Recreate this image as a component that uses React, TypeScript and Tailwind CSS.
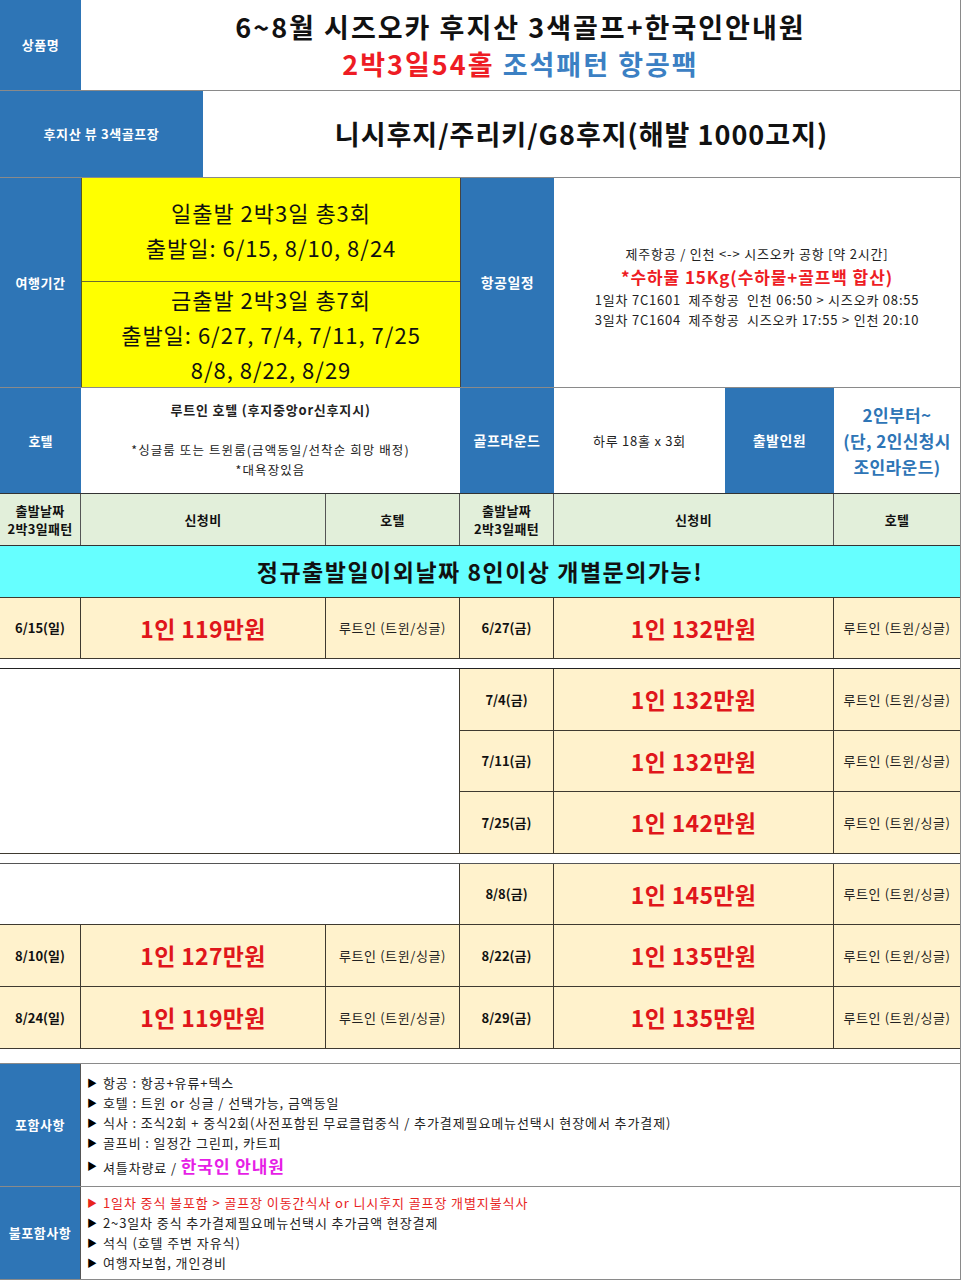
import React from "react";

type P = { date: string; price: string };

function PriceRow({ date, price, side, h }: P & { side: "l" | "r"; h: string }) {
  return (
    <div className={`flex ${h} border-b-[1.5px] border-[#3f3a30] bg-[#fff2cc]`}>
      <div
        className={`${side === "l" ? "w-[81px]" : "w-[94px]"} flex items-center justify-center border-r-[1.5px] border-[#3f3a30] text-[13px] font-bold text-[#111]`}
      >
        {date}
      </div>
      <div
        className={`${side === "l" ? "w-[245px]" : "w-[280px]"} flex items-center justify-center border-r-[1.5px] border-[#3f3a30] text-[23px] font-bold text-[#e0161b] tracking-[0.3px]`}
      >
        {price}
      </div>
      <div
        className={`${side === "l" ? "w-[134px] border-r-[1.5px] border-[#3f3a30]" : "flex-1"} flex items-center justify-center text-[13px] text-[#222] tracking-[0.6px]`}
      >
        루트인 (트윈/싱글)
      </div>
    </div>
  );
}

function Blank({ h }: { h: string }) {
  return <div className={`${h} bg-white border-r-[1.5px] border-[#3f3a30]`} />;
}

function Bullet({ children, red }: { children: React.ReactNode; red?: boolean }) {
  return (
    <div className={`flex items-center gap-[5px] ${red ? "text-[#e8241e]" : "text-[#222]"}`}>
      <span className={`text-[10px] ${red ? "text-[#e8241e]" : "text-black"}`}>▶</span>
      <span>{children}</span>
    </div>
  );
}

export default function App() {
  return (
    <div className="w-[961px] h-[1280px] bg-white font-['Noto_Sans_CJK_KR','Noto_Sans',sans-serif] overflow-hidden border-r border-[#8a8a8a]">
      {/* Row 1 */}
      <div className="flex h-[91px] border-b border-[#8a8a8a]">
        <div className="w-[81px] bg-[#2e75b6] flex items-center justify-center text-white text-[13px] font-bold tracking-[0.5px]">상품명</div>
        <div className="flex-1 flex flex-col items-center justify-center leading-[37px]">
          <div className="text-[27px] font-bold text-[#111] tracking-[2px]">6~8월 시즈오카 후지산 3색골프+한국인안내원</div>
          <div className="text-[27px] font-bold tracking-[2px]">
            <span className="text-[#ee1c24]">2박3일54홀</span> <span className="text-[#3b80c3]">조석패턴 항공팩</span>
          </div>
        </div>
      </div>

      {/* Row 2 */}
      <div className="flex h-[87px] border-b border-[#8a8a8a]">
        <div className="w-[203px] bg-[#2e75b6] flex items-center justify-center text-white text-[13px] font-bold tracking-[0.6px]">후지산 뷰 3색골프장</div>
        <div className="flex-1 flex items-center justify-center text-[27px] font-bold text-[#111] tracking-[1px]">
          니시후지/주리키/G8후지(해발 1000고지)
        </div>
      </div>

      {/* Row 3 */}
      <div className="flex h-[210px] border-b border-[#8a8a8a]">
        <div className="w-[81px] bg-[#2e75b6] flex items-center justify-center text-white text-[13px] font-bold tracking-[0.5px]">여행기간</div>
        <div className="w-[379px] flex flex-col bg-[#ffff00] border-l border-[#5a5a20] text-[22px] text-[#111] leading-[35px] tracking-[1px]">
          <div className="h-[105px] flex flex-col items-center justify-center border-b border-[#6b6b30]">
            <div>일출발 2박3일 총3회</div>
            <div>출발일: 6/15, 8/10, 8/24</div>
          </div>
          <div className="flex-1 flex flex-col items-center justify-center">
            <div>금출발 2박3일 총7회</div>
            <div>출발일: 6/27, 7/4, 7/11, 7/25</div>
            <div>8/8, 8/22, 8/29</div>
          </div>
        </div>
        <div className="w-[94px] bg-[#2e75b6] flex items-center justify-center text-white text-[14px] font-bold border-l border-[#444] tracking-[0.5px]">항공일정</div>
        <div className="flex-1 flex flex-col items-center justify-center text-[13px] text-[#222] leading-[20px] pt-[8px] tracking-[0.8px]">
          <div>제주항공 / 인천 &lt;-&gt; 시즈오카 공항 [약 2시간]</div>
          <div className="text-[17px] font-bold text-[#ee1c24] leading-[26px] tracking-[0.9px]">*수하물 15Kg(수하물+골프백 합산)</div>
          <div>1일차 7C1601&nbsp;&nbsp;제주항공&nbsp;&nbsp;인천 06:50 &gt; 시즈오카 08:55</div>
          <div>3일차 7C1604&nbsp;&nbsp;제주항공&nbsp;&nbsp;시즈오카 17:55 &gt; 인천 20:10</div>
        </div>
      </div>

      {/* Row 4 */}
      <div className="flex h-[106px] border-b-[1.5px] border-[#333]">
        <div className="w-[81px] bg-[#2e75b6] flex items-center justify-center text-white text-[13px] font-bold">호텔</div>
        <div className="w-[379px] flex flex-col items-center text-[12.5px] text-[#222] pt-[12px] tracking-[1.1px]">
          <div className="font-bold text-[13px] leading-[20px] tracking-[0.8px]">루트인 호텔 (후지중앙or신후지시)</div>
          <div className="mt-[20px] leading-[20px]">*싱글룸 또는 트윈룸(금액동일/선착순 희망 배정)</div>
          <div className="leading-[20px]">*대욕장있음</div>
        </div>
        <div className="w-[94px] bg-[#2e75b6] flex items-center justify-center text-white text-[14px] font-bold tracking-[0.5px]">골프라운드</div>
        <div className="w-[171px] flex items-center justify-center text-[13px] text-[#222] tracking-[0.75px]">하루 18홀 x 3회</div>
        <div className="w-[109px] bg-[#2e75b6] flex items-center justify-center text-white text-[14px] font-bold tracking-[0.5px]">출발인원</div>
        <div className="flex-1 flex flex-col items-center justify-center text-[17px] font-bold text-[#2e75b6] leading-[26px] tracking-[0.4px]">
          <div>2인부터~</div>
          <div>(단, 2인신청시</div>
          <div>조인라운드)</div>
        </div>
      </div>

      {/* Header row */}
      <div className="flex h-[52px] bg-[#e2efda] border-b-[1.5px] border-[#333] text-[13px] font-bold text-[#111] tracking-[0.3px]">
        <div className="w-[81px] flex flex-col items-center justify-center leading-[18px] border-r border-[#555]">
          <div>출발날짜</div>
          <div>2박3일패턴</div>
        </div>
        <div className="w-[245px] flex items-center justify-center border-r border-[#555]">신청비</div>
        <div className="w-[134px] flex items-center justify-center border-r border-[#555]">호텔</div>
        <div className="w-[94px] flex flex-col items-center justify-center leading-[18px] border-r border-[#555]">
          <div>출발날짜</div>
          <div>2박3일패턴</div>
        </div>
        <div className="w-[280px] flex items-center justify-center border-r border-[#555]">신청비</div>
        <div className="flex-1 flex items-center justify-center">호텔</div>
      </div>

      {/* Cyan */}
      <div className="h-[52px] bg-[#66ffff] flex items-center justify-center text-[23px] font-bold text-[#111] border-b-[1.5px] border-[#3f3a30] tracking-[1.5px]">
        정규출발일이외날짜 8인이상 개별문의가능!
      </div>

      {/* Group 1 */}
      <div className="flex">
        <div className="w-[460px]">
          <PriceRow side="l" h="h-[61px]" date="6/15(일)" price="1인 119만원" />
        </div>
        <div className="flex-1">
          <PriceRow side="r" h="h-[61px]" date="6/27(금)" price="1인 132만원" />
        </div>
      </div>

      <div className="h-[10px] border-b-[1.5px] border-[#222]" />

      {/* Group 2 */}
      <div className="flex">
        <div className="w-[460px] flex flex-col border-b-[1.5px] border-[#3f3a30]">
          <div className="flex-1 bg-white border-r-[1.5px] border-[#3f3a30]" />
        </div>
        <div className="flex-1">
          <PriceRow side="r" h="h-[62px]" date="7/4(금)" price="1인 132만원" />
          <PriceRow side="r" h="h-[61px]" date="7/11(금)" price="1인 132만원" />
          <PriceRow side="r" h="h-[62px]" date="7/25(금)" price="1인 142만원" />
        </div>
      </div>

      <div className="h-[10px] border-b-[1.5px] border-[#555]" />

      {/* Group 3 */}
      <div className="flex">
        <div className="w-[460px]">
          <div className="border-b-[1.5px] border-[#3f3a30]">
            <Blank h="h-[60px]" />
          </div>
          <PriceRow side="l" h="h-[62px]" date="8/10(일)" price="1인 127만원" />
          <PriceRow side="l" h="h-[62px]" date="8/24(일)" price="1인 119만원" />
        </div>
        <div className="flex-1">
          <PriceRow side="r" h="h-[61px]" date="8/8(금)" price="1인 145만원" />
          <PriceRow side="r" h="h-[62px]" date="8/22(금)" price="1인 135만원" />
          <PriceRow side="r" h="h-[62px]" date="8/29(금)" price="1인 135만원" />
        </div>
      </div>

      <div className="h-[15px] border-b border-[#8a8a8a]" />

      {/* Included */}
      <div className="flex h-[123px] border-b border-[#8a8a8a]">
        <div className="w-[81px] bg-[#2e75b6] flex items-center justify-center text-white text-[13px] font-bold border-r border-[#555] tracking-[0.5px]">포함사항</div>
        <div className="flex-1 flex flex-col justify-center pl-[6px] text-[13px] leading-[20px] pt-[2px] tracking-[0.9px]">
          <Bullet>항공 : 항공+유류+텍스</Bullet>
          <Bullet>호텔 : 트윈 or 싱글 / 선택가능, 금액동일</Bullet>
          <Bullet>식사 : 조식2회 + 중식2회(사전포함된 무료클럽중식 / 추가결제필요메뉴선택시 현장에서 추가결제)</Bullet>
          <Bullet>골프비 : 일정간 그린피, 카트피</Bullet>
          <Bullet>
            셔틀차량료 / <span className="text-[17px] font-bold text-[#e61ee6] leading-[26px]">한국인 안내원</span>
          </Bullet>
        </div>
      </div>

      {/* Not included */}
      <div className="flex h-[93px] border-b border-[#8a8a8a]">
        <div className="w-[81px] bg-[#2e75b6] flex items-center justify-center text-white text-[13px] font-bold border-r border-[#555] tracking-[0.5px]">불포함사항</div>
        <div className="flex-1 flex flex-col justify-center pl-[6px] text-[13px] leading-[20px] tracking-[0.9px]">
          <Bullet red>1일차 중식 불포함 &gt; 골프장 이동간식사 or 니시후지 골프장 개별지불식사</Bullet>
          <Bullet>2~3일차 중식 추가결제필요메뉴선택시 추가금액 현장결제</Bullet>
          <Bullet>석식 (호텔 주변 자유식)</Bullet>
          <Bullet>여행자보험, 개인경비</Bullet>
        </div>
      </div>
    </div>
  );
}
